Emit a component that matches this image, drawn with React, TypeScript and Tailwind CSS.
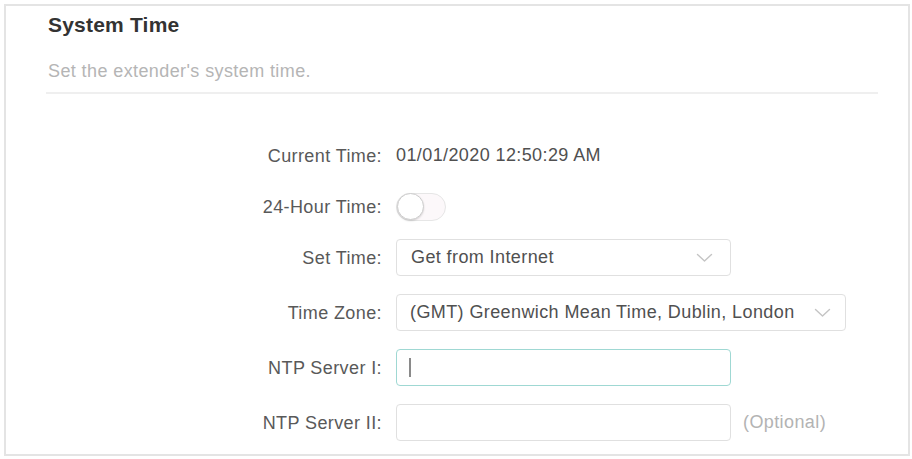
import React, { useState } from 'react';

const font = { fontFamily: '"Liberation Sans", Arial, sans-serif' };

const Chevron: React.FC = () => (
    <svg width="17" height="10" viewBox="0 0 17 10" fill="none" className="shrink-0">
        <path d="M1.5 1.5 L8.5 8 L15.5 1.5" stroke="#c4c4c4" strokeWidth="1.4" strokeLinecap="round" strokeLinejoin="round" />
    </svg>
);

const Row: React.FC<{ label: string; className?: string; children: React.ReactNode }> = ({ label, className = '', children }) => (
    <div className={`grid grid-cols-[336px_1fr] gap-x-[14px] items-center h-[37px] ${className}`}>
        <label className="text-right text-[18px] tracking-[0.4px] text-[#595959] leading-[22px]">{label}</label>
        <div className="flex items-center h-full">{children}</div>
    </div>
);

const SystemTime: React.FC = () => {
    const [hour24, setHour24] = useState(false);
    const [ntp1, setNtp1] = useState('');
    const [ntp2, setNtp2] = useState('');

    return (
        <div className="min-h-[459px] bg-white p-[4px]" style={font}>
            <div className="w-[906px] h-[452px] border-2 border-[#e4e4e4] pl-[40px] pr-[30px] pt-[7px]">
                <h2 className="text-[21px] leading-[24px] font-bold tracking-[0.2px] text-[#333333] pl-[2px]">System Time</h2>
                <p className="mt-[23px] text-[18px] leading-[22px] tracking-[0.4px] text-[#b5b5b5] pl-[2px]">
                    Set the extender's system time.
                </p>
                <div className="mt-[10px] h-[2px] bg-[#efefef]" />

                <div className="mt-[43px] flex flex-col">
                    <Row label="Current Time:">
                        <span className="text-[18px] tracking-[0.4px] text-[#505050]">01/01/2020 12:50:29 AM</span>
                    </Row>

                    <Row label="24-Hour Time:" className="mt-[14px]">
                        <button
                            type="button"
                            onClick={() => setHour24(!hour24)}
                            className={`flex items-center w-[50px] h-[28px] rounded-full border border-[#e6e6e6] ${hour24 ? 'bg-[#4acbd6] justify-end' : 'bg-[#fcf8fa] justify-start'}`}
                        >
                            <span className="w-[27px] h-[27px] rounded-full bg-white border border-[#cdcdcd] shadow-[0_1px_2px_rgba(0,0,0,0.15)]" />
                        </button>
                    </Row>

                    <Row label="Set Time:" className="mt-[14px]">
                        <div className="flex items-center justify-between w-[335px] h-full border border-[#e0e0e0] rounded-[4px] pl-[14px] pr-[17px]">
                            <span className="text-[18px] tracking-[0.4px] text-[#505050]">Get from Internet</span>
                            <Chevron />
                        </div>
                    </Row>

                    <Row label="Time Zone:" className="mt-[18px]">
                        <div className="flex items-center justify-between w-[450px] h-full border border-[#e0e0e0] rounded-[4px] pl-[13px] pr-[14px]">
                            <span className="text-[18px] tracking-[0.4px] text-[#505050] whitespace-nowrap">(GMT) Greenwich Mean Time, Dublin, London</span>
                            <Chevron />
                        </div>
                    </Row>

                    <Row label="NTP Server I:" className="mt-[18px]">
                        <div className="relative w-[335px] h-full">
                            <input
                                type="text"
                                value={ntp1}
                                onChange={e => setNtp1(e.target.value)}
                                className="w-full h-full border border-[#9fd8d3] rounded-[4px] px-[14px] text-[18px] text-[#505050] outline-none"
                            />
                            {ntp1 === '' && <span className="absolute left-[13px] top-[9px] w-[2px] h-[19px] bg-[#8a8a8a]" />}
                        </div>
                    </Row>

                    <Row label="NTP Server II:" className="mt-[18px]">
                        <input
                            type="text"
                            value={ntp2}
                            onChange={e => setNtp2(e.target.value)}
                            className="w-[335px] h-full border border-[#e0e0e0] rounded-[4px] px-[14px] text-[18px] text-[#505050] outline-none"
                        />
                        <span className="ml-[12px] text-[18px] tracking-[0.4px] text-[#b3b3b3]">(Optional)</span>
                    </Row>
                </div>
            </div>
        </div>
    );
};

export default function App() {
    return <SystemTime />;
}
